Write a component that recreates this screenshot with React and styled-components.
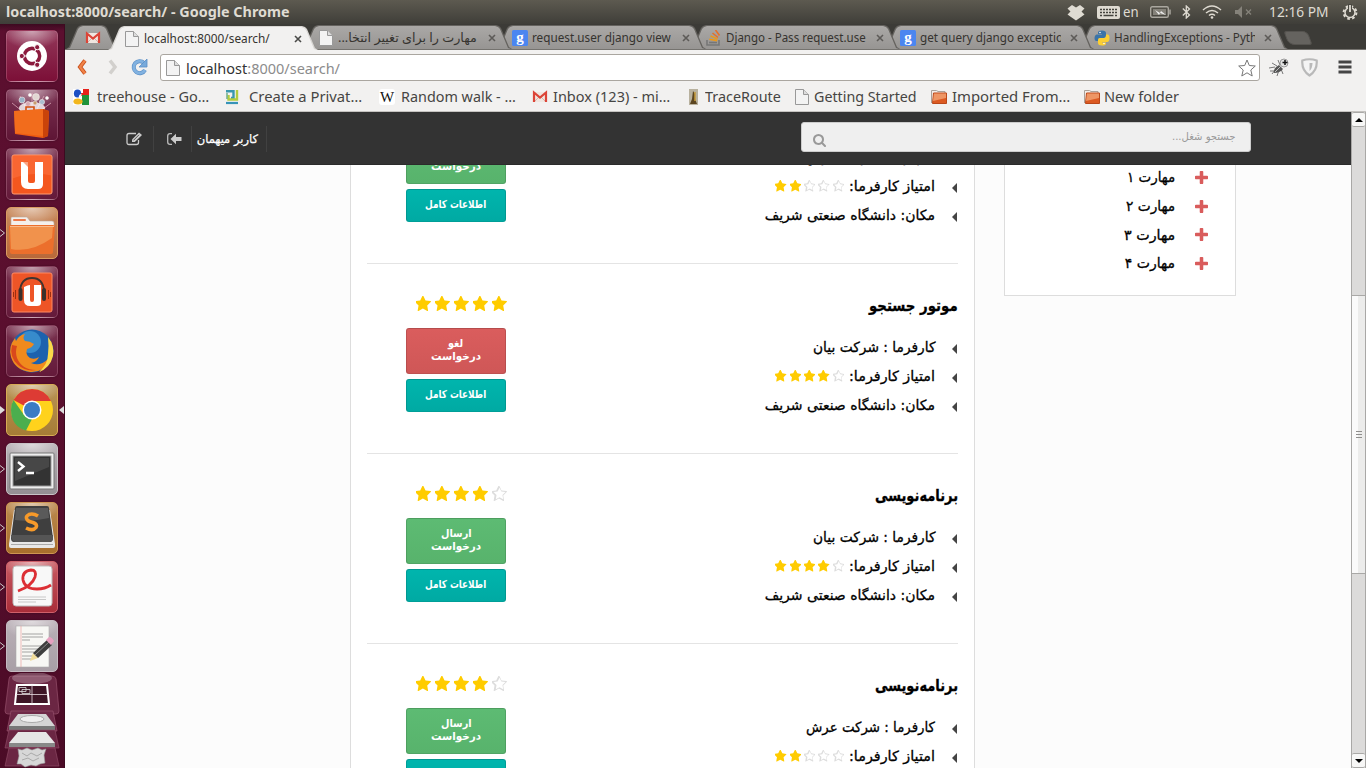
import React, { useLayoutEffect, useRef, useState } from "react";
import styled, { createGlobalStyle, css } from "styled-components";

const latin = `"Noto Sans", "DejaVu Sans", sans-serif`;
const persian = `"DejaVu Sans", sans-serif`;

const GlobalStyle = createGlobalStyle`
  * { box-sizing: border-box; }
  body { margin: 0; overflow: hidden; background: #3c3b37; font-family: ${latin}; }
  svg { display: block; flex: none; }
`;

/* ---------- text fitted to a given width ---------- */
const FitBox = styled.span`
  display: block;
  flex: none;
  width: ${(p) => p.$w}px;
  white-space: nowrap;
  direction: ${(p) => (p.$rtl ? "rtl" : "ltr")};
`;
const FitInner = styled.span`
  display: inline-block;
  transform-origin: ${(p) => (p.$rtl ? "right" : "left")} center;
`;
function Fit({ w, rtl, children }) {
  const ref = useRef(null);
  const [scale, setScale] = useState(1);
  useLayoutEffect(() => {
    const natural = ref.current.offsetWidth;
    if (natural) setScale(w / natural);
  }, [w]);
  return (
    <FitBox $w={w} $rtl={rtl}>
      <FitInner ref={ref} $rtl={rtl} style={{ transform: `scaleX(${scale})` }}>
        {children}
      </FitInner>
    </FitBox>
  );
}

/* ---------- desktop ---------- */
const Desktop = styled.div`
  width: 1366px;
  height: 768px;
  display: flex;
  flex-direction: column;
  overflow: hidden;
`;
const TopPanel = styled.header`
  height: 24px;
  flex: none;
  display: flex;
  align-items: center;
  padding: 0 8px 0 6px;
  color: #dfdbd2;
  font-size: 14px;
  line-height: 24px;
  background: linear-gradient(#5d5a50, #3f3e39);
`;
const WindowTitle = styled.div`
  font-weight: 700;
  margin-right: auto;
`;
const Slot = styled.div`
  flex: none;
  width: ${(p) => p.$w}px;
  margin-left: ${(p) => p.$ml || 0}px;
`;
const Workspace = styled.div`
  flex: 1;
  min-height: 0;
  display: flex;
`;

/* ---------- launcher ---------- */
const Launcher = styled.aside`
  width: 65px;
  flex: none;
  height: 744px;
  padding-top: 6px;
  background: linear-gradient(#3c0a20 0, #5b0f2f 7px, #5a0f2e 50%, #4b0b26);
  border-right: 1px solid #3d0a20;
`;
const LauncherRow = styled.div`
  height: 59px;
  display: grid;
  grid-template-columns: 6px 52px 6px;
  align-items: center;
  padding-bottom: 7px;
`;
const Tile = styled.div`
  width: 52px;
  height: 52px;
  border-radius: 5px;
  border: 1px solid ${(p) => p.$edge || "rgba(255,200,220,.22)"};
  background: radial-gradient(ellipse 30px 18px at 50% 0, rgba(255, 255, 255, 0.55), rgba(255, 255, 255, 0)), ${(p) => p.$bg};
  box-shadow: 0 0 2px rgba(0, 0, 0, 0.35);
  svg { margin: -1px; }
`;
const Folded = styled.div`
  margin-top: -6px;
  padding-left: 4px;
`;

const Pip = ({ on, flip }) =>
  on ? (
    <svg width="6" height="8" viewBox="0 0 6 8">
      {flip ? <path d="M6 0v8L1 4z" fill="#ddd" /> : on === "full" ? <path d="M0 0v8l5-4z" fill="#ddd" /> : <path d="M0 .5L4.500 4 0 7.500" fill="none" stroke="#ccc" />}
    </svg>
  ) : (
    <span />
  );

const art = {
  ubuntu: (
    <>
      <circle cx="26" cy="26" r="15" fill="#fff" />
      <circle cx="26" cy="26" r="7.600" fill="none" stroke="#8b1a3d" strokeWidth="3.600" />
      <path d="M26 26L12 26M26 26L33 14M26 26L33 38" stroke="#fff" strokeWidth="1.200" />
      <circle cx="26" cy="26" r="5.600" fill="#fff" />
      {[[15.8, 26], [31.2, 17.2], [31.2, 34.8]].map(([x, y]) => (
        <circle key={y} cx={x} cy={y} r="2.600" fill="#8b1a3d" stroke="#fff" />
      ))}
    </>
  ),
  bag: (
    <>
      <path d="M6 14l10 8M45 14L34 22M14 7l7 14M38 7l-7 13M26 4v18" stroke="#e9b8c6" strokeWidth=".7" />
      <ellipse cx="26" cy="19" rx="13" ry="6" fill="#fff" opacity=".8" />
      {[[16, 11, 3, "#9ab4c8"], [22, 15, 2.5, "#d6a8b4"], [30, 8, 3.4, "#e1d7d2"], [36, 13, 2.6, "#aabfd0"], [41, 9, 1.5, "#fff"], [24, 6, 1.6, "#fff"], [29, 14, 2, "#c99c6f"]].map((c) => (
        <circle key={c[0]} cx={c[0]} cy={c[1]} r={c[2]} fill={c[3]} stroke="#f4e9ea" strokeWidth=".6" />
      ))}
      <path d="M20 22v-4h8v4" fill="none" stroke="#d14d0e" strokeWidth="1.600" />
      <path d="M8 22l29-2 6 2-1 25-5 2L9 45z" fill="#ee5b12" />
      <path d="M8 22l29-2v27L9 44z" fill="#f47321" opacity=".7" />
      <path d="M37 20l6 2-1 25-5 2z" fill="#c9430a" />
    </>
  ),
  one: (
    <>
      <rect x="6" y="7" width="40" height="39" rx="2" fill="#f4571f" stroke="#ff9c72" />
      <path d="M6.500 7.500h39v20q-20-4-39 3z" fill="#ff7b4a" opacity=".45" />
      <path d="M15 16q5-2 7-2v19q0 2 2 2h3q2 0 2-2V14h8v22q0 5-5 5H22q-7 0-7-7z" fill="#fff" />
      <path d="M15 20v-6h7" fill="#fff" />
      <path d="M17 14l5-1v6z" fill="#f4571f" opacity=".55" />
    </>
  ),
  files: (
    <>
      <path d="M5 11q0-1 1-1h15l3 4h22q2 0 2 2v6H5z" fill="#f4f0ec" stroke="#b9a79c" strokeWidth=".6" />
      <rect x="7" y="12" width="13" height="2" rx="1" fill="#ec7a4c" />
      <path d="M3 20q0-2 2-2h42q2 0 2 2l-2 25q0 2-2 2H6q-2 0-2-2z" fill="#ec6f2c" />
      <path d="M4 20q0-1 1-1h42l-1 12Q25 46 5 42z" fill="#f5a55d" opacity=".65" />
      <path d="M4 19.500h44" stroke="#f9b98a" />
    </>
  ),
  music: (
    <>
      <rect x="6" y="7" width="40" height="39" rx="2" fill="#ee5527" stroke="#ff8a62" />
      <path d="M18 21q4-2 6-2v15q0 2 2 2t2-2V19h7v18q0 3-4 3h-7q-6 0-6-6z" fill="#fff" />
      <path d="M14 25Q15 12 26 12t12 13" fill="none" stroke="#41342f" strokeWidth="1.800" />
      <rect x="12.500" y="22" width="4" height="13" rx="2" fill="#3b302c" />
      <rect x="36" y="22" width="4" height="13" rx="2" fill="#3b302c" />
      <path d="M9.500 24v9M7.500 26v5M42.500 24v9M44.500 26v5" stroke="#9c2e10" />
    </>
  ),
  firefox: (
    <>
      <circle cx="26" cy="26" r="21.500" fill="#1c62ae" />
      <circle cx="24" cy="17" r="11" fill="#4aa6e0" opacity=".6" />
      <path d="M45 16q4 12-1 20-7 12-20 11Q9 45 5 32 2 22 9 13l1 3q3-6 9-7-3 4 0 7 5 0 9 3-2 4-7 5-2 6 3 9 5 2 9-1-2 5-8 6 9 4 17-4 5-6 2-18z" fill="#f08a1d" />
      <path d="M6 20q-3 12 6 20 8 7 18 5Q16 45 11 33q-2-6 0-12z" fill="#d9481c" />
      <path d="M42 12q7 9 5 19-3 12-14 16 9-8 9-18 1-8 0-17z" fill="#fbd94a" />
    </>
  ),
  chrome: (
    <>
      <circle cx="26" cy="26" r="21" fill="#ffd21c" />
      <path d="M26 26L7.500 16Q14 5 26 5q13 0 19 12H26z" fill="#dd3b34" />
      <path d="M7.500 16L18 31l8 4-6 11.500Q5 42 5 26q0-6 2.500-10z" fill="#4bae4e" />
      <circle cx="26" cy="26" r="9.500" fill="#fff" />
      <circle cx="26" cy="26" r="8" fill="#3c7cc4" />
    </>
  ),
  terminal: (
    <>
      <rect x="4" y="10" width="44" height="36" rx="1" fill="#eee" stroke="#777" />
      <rect x="7" y="13" width="38" height="30" fill="#333" stroke="#999" />
      <path d="M9 15h34v9L9 38z" fill="#555" opacity=".6" />
      <path d="M12 19l5.500 4.500L12 28M20 30h8" fill="none" stroke="#fff" strokeWidth="2.400" />
    </>
  ),
  sublime: (
    <>
      <path d="M8 8h36l5 34v2q0 2-2 2H5q-2 0-2-2v-2z" fill="#e8e8e8" />
      <path d="M9 6q0-2 2-2h30q2 0 2 2l4 30q0 4-3 4H8q-3 0-3-4z" fill="#3f3f3f" />
      <path d="M5 33l1 4q1 3 3 3h34q3 0 4-3v-4z" fill="#555" />
      <path d="M10 6h32l1 10Q25 20 9 18z" fill="#666" opacity=".7" />
      <path d="M5 42.500h42" stroke="#aaa" />
      <path d="M32 14q-5-3-9-1.500-4 2-2 5 1 2 6 3 5 2 3 5-3 4-10 .5" fill="none" stroke="#f79a2a" strokeWidth="3.600" />
    </>
  ),
  pdf: (
    <>
      <rect x="7" y="5" width="39" height="40" rx="3" fill="#f8f8f8" stroke="#bbb" />
      <path d="M12 30q14-5 17-14 2-7-4-7-9 1-8 10 2 9 14 9 8 0 14-4" fill="none" stroke="#dc2f35" strokeWidth="2.800" />
      <path d="M12 36h28M12 38.500h28M12 41h18" stroke="#bbb" strokeWidth=".8" />
    </>
  ),
  editor: (
    <>
      <rect x="10" y="6" width="33" height="41" fill="#f7f7f4" stroke="#aaa" strokeWidth=".6" />
      <path d="M15 6v41" stroke="#e9a0a0" strokeWidth=".7" />
      <path d="M16 14h21M16 17h21M16 20h8M16 26h20M16 29h21M16 32h12M16 36h14M16 39h10" stroke="#999" strokeWidth=".9" />
      <path d="M24 41l3-8 5 5z" fill="#f0dc9a" />
      <path d="M27 33l14-13 5 5-14 13z" fill="#3d3d3d" />
      <path d="M29 35l14-13" stroke="#888" />
      <path d="M40 20l3-3q3 0 5 4l-3 4z" fill="#e7a0c0" />
    </>
  ),
};
const apps = [
  ["ubuntu", "linear-gradient(#92385a,#7c0f37)"],
  ["bag", "linear-gradient(#7b3353,#5e1535)"],
  ["one", "linear-gradient(#7a3350,#641a3a)"],
  ["files", "linear-gradient(#c88a5c,#b9683a)", "#d99b62", "open"],
  ["music", "linear-gradient(#7a3350,#641a3a)"],
  ["firefox", "linear-gradient(#7a3350,#641a3a)"],
  ["chrome", "linear-gradient(#b99456,#a67c36)", "#d8ab55", "full", true],
  ["terminal", "linear-gradient(#b6b0b4,#958f94)", "#c9c3c7", "open"],
  ["sublime", "linear-gradient(#bb8a50,#a86e2c)", "#cf9551", "open"],
  ["pdf", "linear-gradient(#c85a62,#a92d39)", "#cf606a", "open"],
  ["editor", "linear-gradient(#bab0b7,#a89fa6)", "#c5bac1", "open"],
];

function FoldedStack() {
  return (
    <Folded>
      <svg width="56" height="98" viewBox="0 0 56 98" fill="none">
        <path d="M8 3h40q3 0 4 3l3 32q0 3-3 3H4q-3 0-3-3L5 6q0-3 3-3z" fill="#6b2643" stroke="#96506b" strokeWidth=".7" />
        <ellipse cx="28" cy="5" rx="20" ry="6" fill="#fff" opacity=".25" />
        <path d="M13 12h30l2 19H11z" fill="#3e1526" stroke="#fff" strokeWidth="2" />
        <path d="M28 12v19M12 21.500h32" stroke="#e8dde2" strokeWidth=".8" />
        <path d="M15 14.500h7v4h-7zM18 16.500h8v4h-8z" stroke="#ddd" strokeWidth=".8" />
        <path d="M7 38h42l4 20H3z" fill="#6f2a48" stroke="#96506b" strokeWidth=".7" />
        <path d="M14 41h28l9 12H5z" fill="#d4d4d4" />
        <ellipse cx="28" cy="46" rx="12" ry="3.500" fill="#efefef" stroke="#aaa" />
        <path d="M5 53h46v4H5z" fill="#777" />
        <path d="M5 57h46l4 18H1z" fill="#6b2643" stroke="#96506b" strokeWidth=".6" />
        <path d="M14 59h28l9 11H5z" fill="#e6e6e6" />
        <path d="M5 70h46v4H5z" fill="#888" />
        <path d="M5 75h46l4 18H1z" fill="#6b2643" stroke="#96506b" strokeWidth=".6" />
        <path d="M14 76l4 1 5-2 5 2 6-2 4 2 4-1-2 6 1 8-5 1-4 2-5-1-6 2-4-3-4 0 2-8z" fill="#d7d7d7" stroke="#999" strokeWidth=".6" />
        <path d="M18 80l5 3 4-3 6 3 5-3M18 87l6-2 5 3 6-3" stroke="#aaa" />
      </svg>
    </Folded>
  );
}

/* ---------- browser chrome ---------- */
const Browser = styled.main`
  width: 1301px;
  display: flex;
  flex-direction: column;
`;
const TabStrip = styled.div`
  height: 26px;
  flex: none;
  display: flex;
  align-items: flex-end;
  padding-left: 1px;
  background: #3c3b37;
  border-bottom: 1px solid #75736f;
`;
const slant = css`
  clip-path: polygon(0 100%, 3px 22px, 11px 3px, 13px 1px, 16px 0, calc(100% - 16px) 0, calc(100% - 13px) 1px, calc(100% - 11px) 3px, calc(100% - 3px) 22px, 100% 100%);
`;
const Tab = styled.div`
  position: relative;
  flex: none;
  height: 24px;
  width: ${(p) => p.$w}px;
  margin-left: ${(p) => p.$ml || 0}px;
  margin-bottom: ${(p) => (p.$active ? -1 : 0)}px;
  z-index: ${(p) => p.$z};
  padding-left: ${(p) => p.$pl || 16}px;
  padding-top: 2px;
  display: flex;
  align-items: center;
  font-size: 12.5px;
  line-height: 22px;
  color: #35332f;
  &::before, &::after {
    content: "";
    position: absolute;
    z-index: -1;
    inset: 0;
    ${slant}
    background: ${(p) => (p.$active ? "#d8d6d3" : "#65635f")};
  }
  &::after {
    inset: 1px 1px 0 1px;
    background: ${(p) => (p.$active ? "#f2f1f0" : "linear-gradient(#aaa8a6,#979593)")};
  }
`;
const TabText = styled.div`
  width: 141px;
  margin-left: 4px;
  overflow: hidden;
`;
const Close = styled.div`
  margin-left: 8px;
  svg { stroke: ${(p) => (p.$active ? "#4a4a48" : "#5d5b58")}; }
`;
const NewTab = styled.div`
  width: 24px;
  height: 14px;
  margin: 0 0 4px -2px;
  border-radius: 3px 5px 3px 6px;
  transform: skewX(20deg);
  background: #65635f;
  border: 1px solid #55534f;
`;
const Toolbar = styled.div`
  height: 35px;
  flex: none;
  display: flex;
  align-items: center;
  padding: 0 14px 1px 11px;
  background: #f2f1f0;
`;
const UrlBox = styled.div`
  width: 1100px;
  height: 27px;
  margin-left: 12px;
  margin-top: 1px;
  display: flex;
  align-items: center;
  padding: 0 3px 0 4px;
  gap: 5px;
  background: #fff;
  border: 1px solid #aaa6a0;
  border-radius: 3px;
  font-size: 14.5px;
  color: #8c8c8c;
  b { font-weight: 400; color: #333; }
  > svg:last-child { margin-left: auto; }
`;
const Bookmarks = styled.div`
  height: 27px;
  flex: none;
  display: grid;
  grid-template-columns: 151px 155px 153px 154px 108px 137px 153px 120px;
  align-items: center;
  padding: 0 0 3px 8px;
  background: #f2f1f0;
  border-bottom: 1px solid #c5c3c0;
  font-size: 14px;
  line-height: 20px;
  color: #464543;
`;
const Bookmark = styled.div`
  display: flex;
  align-items: center;
  gap: ${(p) => p.$gap}px;
`;

const icons = {
  page: (
    <svg width="16" height="16" viewBox="0 0 16 16">
      <path d="M1.500.5h8l5 5v10h-13z" fill="#f3f3f3" stroke="#999" />
      <path d="M9.500.5v5h5" fill="#ddd" stroke="#999" />
    </svg>
  ),
  gmail: (
    <svg width="16" height="16" viewBox="0 0 16 16">
      <path d="M2 3h12v10H2z" fill="#f0e6e0" />
      <path d="M2 13l5-5M14 13L9 8" stroke="#d7b4aa" />
      <path d="M2 13V3.500l6 5 6-5V13" fill="none" stroke="#dc4437" strokeWidth="2.200" />
    </svg>
  ),
  g: (
    <svg width="16" height="16" viewBox="0 0 16 16">
      <rect width="16" height="16" rx="1.500" fill="#4b86f0" />
      <text x="8" y="11.500" textAnchor="middle" fontFamily="Liberation Serif, serif" fontWeight="700" fontSize="15" fill="#fff">g</text>
    </svg>
  ),
  stack: (
    <svg width="16" height="16" viewBox="0 0 16 16">
      <path d="M1 10v5h12v-5" fill="none" stroke="#777" strokeWidth="1.600" />
      <path d="M3 12.500h8" stroke="#777" strokeWidth="1.600" />
      <path d="M3.200 9.300l8 1.300M4.500 6l7 3" stroke="#e9981d" strokeWidth="1.600" />
      <path d="M6.500 3l5.500 4.500M9.500 0l4 5.500" stroke="#e5702a" strokeWidth="1.600" />
    </svg>
  ),
  python: (
    <svg width="16" height="16" viewBox="0 0 16 16">
      <path d="M8 .5q4 0 4 2.500v3q0 2-2 2H6q-2 0-2 3H2.500Q.5 11 .5 8t2-3.500H8V4H4V2.500Q4 .5 8 .5z" fill="#3b74a8" />
      <path d="M8 15.500q-4 0-4-2.500v-3q0-2 2-2h4q2 0 2-3.500h1.500q2 0 2 3.500t-2 4H8v.5h4V13.500q0 2-4 2z" fill="#fccf32" />
      <circle cx="6" cy="2.500" r=".8" fill="#fff" />
      <circle cx="10" cy="13.500" r=".8" fill="#fff" />
    </svg>
  ),
  google: (
    <svg width="16" height="16" viewBox="0 0 16 16">
      <path d="M0 0h9v9H0zM0 9h9v7H0z" fill="#fff" />
      <path d="M8 0h8v7H8z" fill="#e6211b" />
      <path d="M9 6h7v10H9z" fill="#20933b" />
      <ellipse cx="4.500" cy="4.500" rx="3.600" ry="4" fill="#1c4fc4" />
      <ellipse cx="5" cy="12.500" rx="4.600" ry="3" fill="#f2b61c" />
      <path d="M8.500 5.500q-4 2 0 4.500" fill="none" stroke="#fff" strokeWidth="1.500" />
      <path d="M8 0h2v4H8z" fill="#fff" />
    </svg>
  ),
  priv: (
    <svg width="16" height="16" viewBox="0 0 16 16">
      <path d="M2 2.200h7.500V9H7" fill="none" stroke="#3a97ae" strokeWidth="2.400" />
      <path d="M13 1v9.500H4.500V6" fill="none" stroke="#b3cc3d" strokeWidth="2.400" />
      <path d="M2 14h12" stroke="#3794b8" strokeWidth="2.200" />
      <path d="M3 4v6" stroke="#6eae8a" strokeWidth="1.500" />
    </svg>
  ),
  wiki: (
    <svg width="16" height="16" viewBox="0 0 16 16">
      <rect width="16" height="16" rx="3" fill="#fff" />
      <text x="8" y="13" textAnchor="middle" fontFamily="Liberation Serif, serif" fontSize="15" fill="#111">W</text>
    </svg>
  ),
  trace: (
    <svg width="16" height="16" viewBox="0 0 16 16">
      <rect x="3" width="9" height="16" fill="#b8b19e" />
      <path d="M7 2l2 3v5l2 5H4l2-5z" fill="#5b4520" />
      <path d="M9 3v9" stroke="#c59a39" strokeWidth="1.500" />
    </svg>
  ),
  folder: (
    <svg width="16" height="16" viewBox="0 0 16 16">
      <path d="M.5 14V1.500h5l1.500 1h7V5" fill="#f4eee9" stroke="#aaa29b" />
      <path d="M2.500 4h13v10.500H1.500z" fill="#dc5a22" stroke="#ba481a" />
      <path d="M3 4.500h12v4.500L2 12z" fill="#f2a577" opacity=".8" />
    </svg>
  ),
};

const tabs = [
  { icon: "page", text: "localhost:8000/search/", w: 126, active: true },
  { icon: "page", text: "مهارت را برای تغییر انتخا...", w: 139, rtl: true },
  { icon: "g", text: "request.user django view", w: 139 },
  { icon: "stack", text: "Django - Pass request.use", w: 140 },
  { icon: "g", text: "get query django exceptio", w: 143 },
  { icon: "python", text: "HandlingExceptions - Pyth", w: 143 },
];
const bookmarks = [
  ["google", "treehouse - Go…", 112, 8],
  ["priv", "Create a Privat…", 113, 9],
  ["wiki", "Random walk - …", 115, 6],
  ["gmail", "Inbox (123) - mi…", 117, 5],
  ["trace", "TraceRoute", 76, 3],
  ["page", "Getting Started", 103, 4],
  ["folder", "Imported From…", 118, 5],
  ["folder", "New folder", 75, 4],
];

/* ---------- web page ---------- */
const Viewport = styled.div`
  flex: 1;
  min-height: 0;
  display: flex;
`;
const Page = styled.div`
  width: 1286px;
  display: flex;
  flex-direction: column;
  background: #fcfcfc;
  font-family: ${persian};
  color: #000;
`;
const Nav = styled.nav`
  height: 53px;
  flex: none;
  display: flex;
  justify-content: space-between;
  padding: 10px 100px 0 61px;
  background: #333;
  border-bottom: 1px solid #2b2b2b;
`;
const UserArea = styled.div`
  display: flex;
  height: 34px;
  align-items: center;
  color: #fff;
  font-size: 11.5px;
  -webkit-text-stroke: 0.25px;
`;
const NavCell = styled.div`
  height: 26px;
  display: flex;
  align-items: center;
  padding: 0 ${(p) => p.$pr}px 0 ${(p) => p.$pl}px;
  border-right: 1px solid #414141;
`;
const SearchField = styled.div`
  width: 450px;
  height: 30px;
  display: flex;
  align-items: center;
  justify-content: space-between;
  padding: 0 14px 2px 11px;
  background: #efefef;
  border: 1px solid #ccc;
  border-radius: 3px;
  font-size: 11px;
  color: #999;
  svg { margin-top: 8px; }
`;
const Content = styled.div`
  flex: 1;
  min-height: 0;
  overflow: hidden;
  display: flex;
  align-items: flex-start;
  gap: 29px;
  padding-left: 285px;
`;
const Results = styled.section`
  width: 625px;
  margin-top: -91px;
  padding: 0 16px;
  background: #fff;
  border: solid #ddd;
  border-width: 0 1px;
`;
const Job = styled.article`
  height: 190px;
  display: flex;
  justify-content: space-between;
  border-bottom: 1px solid #e4e4e4;
`;
const Actions = styled.div`
  width: 101px;
  margin-left: 39px;
  padding-top: 32px;
  display: flex;
  flex-direction: column;
  align-items: flex-start;
`;
const Stars = styled.div`
  direction: ltr;
  display: flex;
  gap: ${(p) => p.$gap}px;
  margin: ${(p) => p.$m};
`;
const Button = styled.div`
  width: 100px;
  height: ${(p) => p.$h}px;
  margin-bottom: 5px;
  padding-bottom: 2px;
  display: flex;
  flex-direction: column;
  align-items: center;
  justify-content: center;
  font-size: 11px;
  font-weight: 700;
  line-height: 13px;
  color: #fff;
  border-radius: 3px;
  border: 1px solid rgba(0, 0, 0, 0.12);
  background: ${(p) => p.$bg};
`;
const Details = styled.div`
  direction: rtl;
  width: 300px;
  font-size: 14px;
  line-height: 29px;
  -webkit-text-stroke: 0.3px;
`;
const JobTitle = styled.h3`
  margin: 27px 0 12px;
  font-size: 16px;
  line-height: 30px;
  font-weight: 700;
  color: #000;
`;
const Line = styled.div`
  height: 29px;
  display: flex;
  align-items: center;
`;
const Caret = styled.i`
  margin: 2px 1px 0 17px;
  border: solid transparent;
  border-width: 5px 0 5px 5px;
  border-right: 5px solid #444;
  border-left: 0;
`;
const Skills = styled.aside`
  direction: rtl;
  width: 232px;
  height: 133px;
  margin-top: -2px;
  padding-right: 27px;
  background: #fff;
  border: 1px solid #ddd;
  border-top: 0;
  font-size: 14px;
  -webkit-text-stroke: 0.3px;
`;
const Skill = styled.div`
  height: 28.7px;
  display: flex;
  align-items: center;
  gap: 20px;
  line-height: 28px;
`;

const starPath = "M1664 647q0 22-26 48l-363 354 86 500q1 7 1 20 0 21-10.500 35.500t-30.500 14.500q-19 0-40-12l-449-236-449 236q-22 12-40 12-21 0-31.500-14.500t-10.500-35.500q0-6 2-20l86-500-364-354q-25-27-25-48 0-37 56-46l502-73 225-455q19-41 49-41t49 41l225 455 502 73q56 9 56 46z";
const starOutline = "M1201 1004l306-297-422-62-189-382-189 382-422 62 306 297-73 421 378-199 377 199zm463-357q0 22-26 48l-363 354 86 500q1 7 1 20 0 50-41 50-19 0-40-12l-449-236-449 236q-22 12-40 12-21 0-31.500-14.500t-10.500-35.500q0-6 2-20l86-500-364-354q-25-27-25-48 0-37 56-46l502-73 225-455q19-41 49-41t49 41l225 455 502 73q56 9 56 46z";
const Rating = ({ value, size, gap, m }) => (
  <Stars $gap={gap} $m={m}>
    {[1, 2, 3, 4, 5].map((n) => (
      <svg key={n} width={size} height={size} viewBox="128 80 1536 1536">
        <path d={n <= value ? starPath : starOutline} fill={n <= value ? "#fc0" : "#ddd"} />
      </svg>
    ))}
  </Stars>
);
const plusPath = "M1600 736v192q0 40-28 68t-68 28h-416v416q0 40-28 68t-68 28h-192q-40 0-68-28t-28-68v-416h-416q-40 0-68-28t-28-68v-192q0-40 28-68t68-28h416v-416q0-40 28-68t68-28h192q40 0 68 28t28 68v416h416q40 0 68 28t28 68z";
const searchPath = "M1216 832q0-185-131.500-316.500t-316.500-131.500-316.500 131.500-131.500 316.500 131.500 316.500 316.500 131.500 316.500-131.500 131.500-316.500zm512 832q0 52-38 90t-90 38q-54 0-90-38l-343-342q-179 124-399 124-143 0-273.500-55.500t-225-150-150-225-55.500-273.500 55.500-273.500 150-225 225-150 273.500-55.500 273.500 55.500 225 150 150 225 55.500 273.500q0 220-124 399l343 343q37 37 37 90z";

const green = "linear-gradient(#5dbb73,#58b36c)";
const red = "linear-gradient(#da5d5d,#cf5757)";
const teal = "linear-gradient(#00b5ad,#00aaa3)";

const programming = "برنامه‌نویسی";
const jobs = [
  { title: programming, tw: 83, company: "عرش", cw: 129, rating: 4, boss: 2 },
  { title: "موتور جستجو", tw: 89, company: "بیان", cw: 122, rating: 5, boss: 4, sent: true },
  { title: programming, tw: 83, company: "بیان", cw: 122, rating: 4, boss: 4 },
  { title: programming, tw: 83, company: "عرش", cw: 129, rating: 4, boss: 2 },
];

function JobCard({ job }) {
  return (
    <Job>
      <Actions>
        <Rating value={job.rating} size={15} gap={4} m="0 0 17px 10px" />
        <Button $h={46} $bg={job.sent ? red : green}>
          <Fit w={job.sent ? 15 : 31} rtl>{job.sent ? "لغو" : "ارسال"}</Fit>
          <Fit w={50} rtl>درخواست</Fit>
        </Button>
        <Button $h={33} $bg={teal}>
          <Fit w={61} rtl>اطلاعات کامل</Fit>
        </Button>
      </Actions>
      <Details>
        <JobTitle><Fit w={job.tw} rtl>{job.title}</Fit></JobTitle>
        <Line><Caret /><Fit w={job.cw} rtl>کارفرما : شرکت {job.company}</Fit></Line>
        <Line>
          <Caret /><Fit w={86} rtl>امتیاز کارفرما:</Fit>
          <Rating value={job.boss} size={11.5} gap={2.8} m="-1px 5px 0 0" />
        </Line>
        <Line><Caret /><Fit w={170} rtl>مکان: دانشگاه صنعتی شریف</Fit></Line>
      </Details>
    </Job>
  );
}

/* ---------- scrollbar ---------- */
const Scrollbar = styled.div`
  width: 15px;
  display: flex;
  flex-direction: column;
  background: #dcdbda;
  border: solid #a9a8a6;
  border-width: 0 1px;
`;
const ScrollButton = styled.div`
  height: 15px;
  flex: none;
  display: grid;
  place-items: center;
  background: #f7f7f6;
  border: 1px solid #a9a8a6;
  border-width: 1px 0;
  border-radius: 2px;
`;
const Thumb = styled.div`
  height: 279px;
  margin-top: 168px;
  margin-bottom: auto;
  display: flex;
  flex-direction: column;
  align-items: center;
  justify-content: center;
  gap: 2px;
  background: linear-gradient(90deg, #fafafa 50%, #ececeb 50%);
  border: 1px solid #a9a8a6;
  border-width: 1px 0;
`;
const Grip = styled.i`
  width: 6px;
  height: 1px;
  background: #8f8e8c;
`;

export default function App() {
  return (
    <Desktop>
      <GlobalStyle />
      <TopPanel>
        <WindowTitle><Fit w={284}>localhost:8000/search/ - Google Chrome</Fit></WindowTitle>
        <Slot $w={18}>
          <svg width="18" height="17" viewBox="0 0 18 17"><path d="M5 1l4 2.500L13 1l4.500 3.500-3 3 3 3L14 13l-5 3.500L4 13 .5 10.500l3-3-3-3z" fill="#dfdbd2" /></svg>
        </Slot>
        <Slot $w={23} $ml={12}>
          <svg width="23" height="13" viewBox="0 0 23 13">
            <rect width="23" height="13" rx="2" fill="#dfdbd2" />
            <path d="M3 3.500h17M3 6.500h17" stroke="#45443e" strokeWidth="1.600" strokeDasharray="2 1" />
            <path d="M3 9.500h2M6.500 9.500h10M18 9.500h2" stroke="#45443e" strokeWidth="1.500" />
          </svg>
        </Slot>
        <Slot $w={16} $ml={3}><Fit w={16}>en</Fit></Slot>
        <Slot $w={21} $ml={11}>
          <svg width="21" height="12" viewBox="0 0 21 12">
            <rect x=".7" y=".7" width="17.600" height="10.600" rx="1.500" fill="none" stroke="#aaa79f" strokeWidth="1.400" />
            <path d="M3 3h13v6H3z" fill="#85827a" />
            <path d="M5 4l5 3 1-2 5 4-6-2-1 2z" fill="#eee" />
            <path d="M20 3.500v5" stroke="#aaa79f" strokeWidth="1.500" />
          </svg>
        </Slot>
        <Slot $w={9} $ml={11}>
          <svg width="9" height="14" viewBox="0 0 9 14"><path d="M.8 3.500L7.500 10 4.300 13V1l3.200 3L.8 10.500" fill="none" stroke="#dfdbd2" strokeWidth="1.300" /></svg>
        </Slot>
        <Slot $w={20} $ml={11}>
          <svg width="20" height="14" viewBox="0 0 20 14">
            <path d="M1 5Q10-3 19 5M4 8q6-5 12 0M7 10.500q3-2.500 6 0" fill="none" stroke="#dfdbd2" strokeWidth="1.500" />
            <circle cx="10" cy="12.500" r="1.300" fill="#dfdbd2" />
          </svg>
        </Slot>
        <Slot $w={18} $ml={13}>
          <svg width="18" height="12" viewBox="0 0 18 12"><path d="M0 4h3l4-4v12L3 8H0z" fill="#85827a" /><path d="M11 3.500l5 5M16 3.500l-5 5" stroke="#85827a" strokeWidth="1.300" /></svg>
        </Slot>
        <Slot $w={60} $ml={16}><Fit w={60}>12:16 PM</Fit></Slot>
        <Slot $w={16} $ml={13}>
          <svg width="16" height="16" viewBox="0 0 16 16">
            <circle cx="8" cy="8.500" r="6.400" fill="none" stroke="#dfdbd2" strokeWidth="2" strokeDasharray="2.600 2.400" />
            <circle cx="8" cy="8.500" r="5" fill="none" stroke="#dfdbd2" strokeWidth="1.500" />
            <path d="M8 0v8" stroke="#4a4942" strokeWidth="4" />
            <path d="M8 1v7" stroke="#dfdbd2" strokeWidth="1.800" />
          </svg>
        </Slot>
      </TopPanel>

      <Workspace>
        <Launcher>
          {apps.map(([name, bg, edge, pip, focus]) => (
            <LauncherRow key={name}>
              <Pip on={pip} />
              <Tile $bg={bg} $edge={edge}><svg width="52" height="52" viewBox="0 0 52 52" fill="none">{art[name]}</svg></Tile>
              <Pip on={focus} flip />
            </LauncherRow>
          ))}
          <FoldedStack />
        </Launcher>

        <Browser>
          <TabStrip>
            <Tab $w={52} $z={8} $pl={19}>{icons.gmail}</Tab>
            {tabs.map((t, i) => (
              <Tab key={i} $w={210} $ml={i ? -16 : -10} $z={t.active ? 9 : 8 - i} $active={t.active}>
                {icons[t.icon]}
                <TabText><Fit w={t.w} rtl={t.rtl}>{t.text}</Fit></TabText>
                <Close $active={t.active}>
                  <svg width="10" height="8" viewBox="0 0 10 8"><path d="M2 1l6 6M8 1L2 7" strokeWidth="1.600" /></svg>
                </Close>
              </Tab>
            ))}
            <NewTab />
          </TabStrip>

          <Toolbar>
            <svg width="12" height="18" viewBox="0 0 12 18"><path d="M9 2.500L4 9l5 6.500" fill="none" stroke="#c9501c" strokeWidth="4" /><path d="M9 2.500L4 9l5 6.500" fill="none" stroke="#f08348" strokeWidth="2.200" /></svg>
            <Slot $w={12} $ml={18}>
              <svg width="12" height="18" viewBox="0 0 12 18"><path d="M4 2.500L9 9l-5 6.500" fill="none" stroke="#d2d0cd" strokeWidth="3.500" /></svg>
            </Slot>
            <Slot $w={17} $ml={13}>
              <svg width="17" height="18" viewBox="0 0 17 18">
                <path d="M13 5A6 6 0 1 0 14 12" fill="none" stroke="#5b8fc6" strokeWidth="4" />
                <path d="M13 5A6 6 0 1 0 14 12" fill="none" stroke="#82b2e0" strokeWidth="2.800" />
                <path d="M16 1v8H8z" fill="#78aadb" stroke="#5b8fc6" strokeWidth=".8" />
              </svg>
            </Slot>
            <UrlBox>
              {icons.page}
              <Fit w={154}><b>localhost</b>:8000/search/</Fit>
              <svg width="18" height="18" viewBox="0 0 18 18"><path d="M9 1l2.300 5.500 6 .5-4.500 4 1.400 6L9 13.800 3.800 17l1.400-6L.7 7l6-.5z" fill="#fff" stroke="#777" /></svg>
            </UrlBox>
            <Slot $w={20} $ml={9}>
              <svg width="20" height="19" viewBox="0 0 20 19">
                <path d="M0 10l6-1M3 5l5 3M8 18l2-6M3 16l4-5M14 16l-2-5M9 2l2 5M1 13h6" stroke="#777" />
                <path d="M5 15q-1-5 5-8l4 4q-3 4-9 4z" fill="#555" />
                <path d="M6 14l6-6" stroke="#bbb" />
                <circle cx="15" cy="5" r="4" fill="#e2e2e2" stroke="#888" strokeWidth=".8" />
                <path d="M16 2v5M13.500 4.500h5" stroke="#111" strokeWidth="1.500" />
              </svg>
            </Slot>
            <Slot $w={17} $ml={12}>
              <svg width="17" height="19" viewBox="0 0 17 19"><path d="M1.300 2.500Q8.500 0 15.700 2.500q.8 10-7.200 15Q.5 12.500 1.300 2.500z" fill="#f4f4f4" stroke="#b9b9b9" strokeWidth="2.200" /><path d="M8.500 5h3q0 5-3 8z" fill="#b9b9b9" /></svg>
            </Slot>
            <Slot $w={14} $ml={20}>
              <svg width="14" height="14" viewBox="0 0 14 14"><path d="M.5 2h13M.5 7h13M.5 12h13" stroke="#454545" strokeWidth="2.800" /></svg>
            </Slot>
          </Toolbar>

          <Bookmarks>
            {bookmarks.map(([icon, text, w, gap]) => (
              <Bookmark key={text} $gap={gap}>{icons[icon]}<Fit w={w}>{text}</Fit></Bookmark>
            ))}
          </Bookmarks>

          <Viewport>
            <Page>
              <Nav>
                <UserArea>
                  <NavCell $pl={0} $pr={10}>
                    <svg width="17" height="14" viewBox="0 0 17 14">
                      <path d="M12.500 8v2.500q0 2-2 2h-7.500q-2 0-2-2v-7q0-2 2-2h7" fill="none" stroke="#ccc" strokeWidth="1.300" />
                      <path d="M6 10V7.500l7-7L16 3 8.800 10z" fill="#ccc" />
                      <path d="M7.500 8.300l5.500-5.500" stroke="#333" strokeWidth=".8" />
                    </svg>
                  </NavCell>
                  <NavCell $pl={13} $pr={9}>
                    <svg width="15" height="12" viewBox="0 0 15 12">
                      <path d="M5 .7H3Q.7.700.7 3v6q0 2.300 2.300 2.300h2" fill="none" stroke="#bbb" strokeWidth="1.300" />
                      <path d="M3.500 6L9 .8V4h5.500v4H9v3.200z" fill="#ccc" />
                    </svg>
                  </NavCell>
                  <NavCell $pl={5} $pr={8}><Fit w={61} rtl>کاربر میهمان</Fit></NavCell>
                </UserArea>
                <SearchField>
                  <svg width="13" height="13" viewBox="64 128 1664 1664"><path d={searchPath} fill="#999" /></svg>
                  <Fit w={64} rtl>جستجو شغل...</Fit>
                </SearchField>
              </Nav>
              <Content>
                <Results>{jobs.map((job, i) => <JobCard key={i} job={job} />)}</Results>
                <Skills>
                  {["۱", "۲", "۳", "۴"].map((n, i) => (
                    <Skill key={n}>
                      <svg width="13" height="13" viewBox="192 128 1408 1408"><path d={plusPath} fill="#d95c5c" /></svg>
                      <Fit w={[48, 49, 51, 50][i]} rtl>مهارت {n}</Fit>
                    </Skill>
                  ))}
                </Skills>
              </Content>
            </Page>
            <Scrollbar>
              <ScrollButton><svg width="8" height="4" viewBox="0 0 8 4"><path d="M0 4l4-4 4 4z" /></svg></ScrollButton>
              <Thumb><Grip /><Grip /><Grip /></Thumb>
              <ScrollButton><svg width="8" height="4" viewBox="0 0 8 4"><path d="M0 0l4 4 4-4z" /></svg></ScrollButton>
            </Scrollbar>
          </Viewport>
        </Browser>
      </Workspace>
    </Desktop>
  );
}
